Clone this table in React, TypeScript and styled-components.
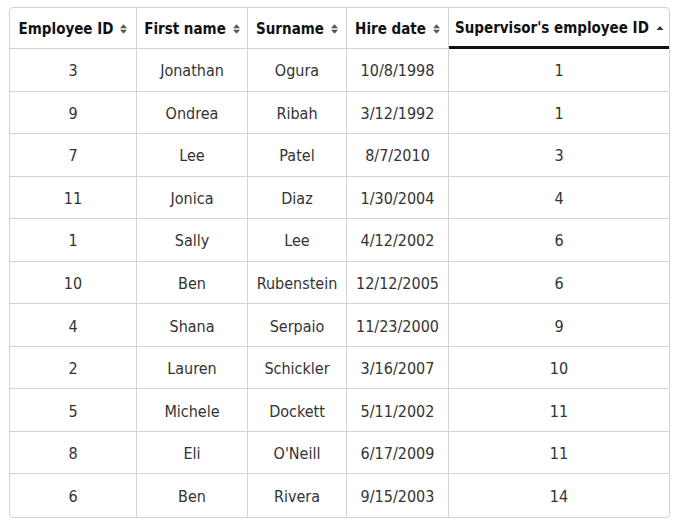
import React from "react";
import styled, { createGlobalStyle } from "styled-components";

const Global = createGlobalStyle`
  html, body { margin: 0; padding: 0; background: #fff; }
  body { font-family: Tahoma, "DejaVu Sans Condensed", "Liberation Sans", sans-serif; }
`;

const Page = styled.div`
  padding: 7px 0 0 9px;
`;

const Frame = styled.div`
  width: 661px;
  border: 1px solid #d3d3d3;
  border-radius: 4px;
  overflow: hidden;
  box-sizing: border-box;
`;

const Table = styled.table`
  width: 100%;
  border-collapse: separate;
  border-spacing: 0;
  table-layout: fixed;
  color: #333;
`;

const Th = styled.th<{ $active?: boolean }>`
  height: 41px;
  padding: 1px 6px 0;
  font-size: 15px;
  font-weight: bold;
  color: #111;
  text-align: center;
  white-space: nowrap;
  border-right: 1px solid #d3d3d3;
  border-bottom: ${(p) => (p.$active ? "3px solid #111" : "1px solid #d3d3d3")};
  box-sizing: border-box;
  &:last-child { border-right: none; }
`;

const HeadInner = styled.span`
  display: inline-flex;
  align-items: center;
  gap: 7px;
`;

const Td = styled.td`
  height: 42.55px;
  padding: 2px 4px 0;
  font-size: 16px;
  text-align: center;
  border-right: 1px solid #d3d3d3;
  border-bottom: 1px solid #d3d3d3;
  box-sizing: border-box;
  white-space: nowrap;
  &:last-child { border-right: none; }
`;

const Row = styled.tr`
  &:last-child td { border-bottom: none; }
`;

const SortIcon = ({ active }: { active?: boolean }) =>
  active ? (
    <svg width="8" height="10" viewBox="0 0 8 10">
      <path d="M0.5 7 L4 3 L7.5 7 Z" fill="#333" />
    </svg>
  ) : (
    <svg width="7" height="10" viewBox="0 0 7 10">
      <path d="M0 4.3 L3.5 0.3 L7 4.3 Z" fill="#555" />
      <path d="M0 5.7 L3.5 9.7 L7 5.7 Z" fill="#555" />
    </svg>
  );

const columns = [
  { label: "Employee ID", width: 127 },
  { label: "First name", width: 111 },
  { label: "Surname", width: 99 },
  { label: "Hire date", width: 102 },
  { label: "Supervisor's employee ID", width: 220, active: true },
];

const rows: [string, string, string, string, string][] = [
  ["3", "Jonathan", "Ogura", "10/8/1998", "1"],
  ["9", "Ondrea", "Ribah", "3/12/1992", "1"],
  ["7", "Lee", "Patel", "8/7/2010", "3"],
  ["11", "Jonica", "Diaz", "1/30/2004", "4"],
  ["1", "Sally", "Lee", "4/12/2002", "6"],
  ["10", "Ben", "Rubenstein", "12/12/2005", "6"],
  ["4", "Shana", "Serpaio", "11/23/2000", "9"],
  ["2", "Lauren", "Schickler", "3/16/2007", "10"],
  ["5", "Michele", "Dockett", "5/11/2002", "11"],
  ["8", "Eli", "O'Neill", "6/17/2009", "11"],
  ["6", "Ben", "Rivera", "9/15/2003", "14"],
];

export default function App() {
  return (
    <>
      <Global />
      <Page>
        <Frame>
          <Table>
            <colgroup>
              {columns.map((c) => (
                <col key={c.label} style={{ width: c.width }} />
              ))}
            </colgroup>
            <thead>
              <tr>
                {columns.map((c) => (
                  <Th key={c.label} $active={c.active}>
                    <HeadInner>
                      {c.label}
                      <SortIcon active={c.active} />
                    </HeadInner>
                  </Th>
                ))}
              </tr>
            </thead>
            <tbody>
              {rows.map((r, i) => (
                <Row key={i}>
                  {r.map((v, j) => (
                    <Td key={j}>{v}</Td>
                  ))}
                </Row>
              ))}
            </tbody>
          </Table>
        </Frame>
      </Page>
    </>
  );
}
